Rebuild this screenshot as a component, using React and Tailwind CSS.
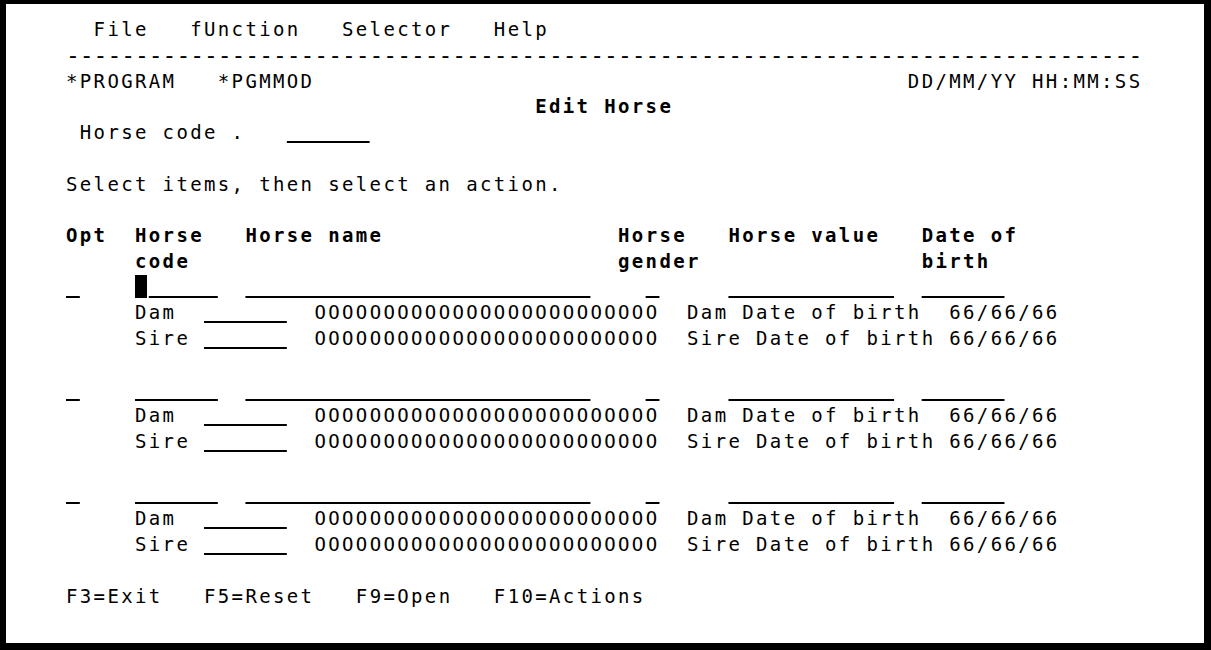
import React from 'react';

// 5250 style green-screen, drawn as an 80 column character grid
const O25 = 'O'.repeat(25);

const Field = ({ n, cursor }) => {
    if (cursor) {
        return (
            <>
                <span className="inline-block w-[13.8px] h-[23px] align-[-4px]">
                    <span className="block w-[12px] h-full bg-black" />
                </span>
                <span className="underline decoration-2 underline-offset-[2px] decoration-black">
                    {' '.repeat(n - 1)}
                </span>
            </>
        );
    }
    return (
        <span className="underline decoration-2 underline-offset-[2px] decoration-black">
            {' '.repeat(n)}
        </span>
    );
};

const Row = ({ items = [], className = '' }) => {
    let pos = 0;
    const parts = [];
    items.forEach((it, i) => {
        const gap = it.col - pos;
        if (gap > 0) parts.push(<span key={`g${i}`}>{' '.repeat(gap)}</span>);
        if (it.field) {
            parts.push(<Field key={i} n={it.field} cursor={it.cursor} />);
            pos = it.col + it.field;
        } else {
            parts.push(
                <span key={i} className={it.bold ? 'font-bold' : ''}>
                    {it.text}
                </span>
            );
            pos = it.col + it.text.length;
        }
    });
    return <div className={`h-[25.75px] whitespace-pre ${className}`}>{parts}</div>;
};

const HorseBlock = ({ cursor }) => (
    <>
        <Row
            items={[
                { col: 1, field: 1 },
                { col: 6, field: 6, cursor },
                { col: 14, field: 25 },
                { col: 43, field: 1 },
                { col: 49, field: 12 },
                { col: 63, field: 6 },
            ]}
        />
        <Row
            items={[
                { col: 6, text: 'Dam' },
                { col: 11, field: 6 },
                { col: 19, text: O25 },
                { col: 46, text: 'Dam Date of birth' },
                { col: 65, text: '66/66/66' },
            ]}
        />
        <Row
            items={[
                { col: 6, text: 'Sire' },
                { col: 11, field: 6 },
                { col: 19, text: O25 },
                { col: 46, text: 'Sire Date of birth' },
                { col: 65, text: '66/66/66' },
            ]}
        />
        <Row />
    </>
);

export default function App() {
    return (
        <div className="w-[1211px] h-[650px] bg-white border-black border-t-4 border-l-[6px] border-r-[7px] border-b-[7px] overflow-hidden">
            <div
                className="pt-[13px] pl-[46.2px] text-black text-[19px] leading-[25.75px] tracking-[2.361px]"
                style={{ fontFamily: '"DejaVu Sans Mono", "Liberation Mono", monospace' }}
            >
                <Row
                    items={[
                        { col: 3, text: 'File' },
                        { col: 10, text: 'fUnction' },
                        { col: 21, text: 'Selector' },
                        { col: 32, text: 'Help' },
                    ]}
                />
                {/* separator dashes: bigger glyph, same 13.8px cell */}
                <Row
                    className="text-[23px] tracking-[-0.05px]"
                    items={[{ col: 1, text: '-'.repeat(78) }]}
                />
                <Row
                    items={[
                        { col: 1, text: '*PROGRAM' },
                        { col: 12, text: '*PGMMOD' },
                        { col: 62, text: 'DD/MM/YY HH:MM:SS' },
                    ]}
                />
                <Row items={[{ col: 35, text: 'Edit Horse', bold: true }]} />
                <Row
                    items={[
                        { col: 2, text: 'Horse code .' },
                        { col: 17, field: 6 },
                    ]}
                />
                <Row />
                <Row items={[{ col: 1, text: 'Select items, then select an action.' }]} />
                <Row />
                <Row
                    items={[
                        { col: 1, text: 'Opt', bold: true },
                        { col: 6, text: 'Horse', bold: true },
                        { col: 14, text: 'Horse name', bold: true },
                        { col: 41, text: 'Horse', bold: true },
                        { col: 49, text: 'Horse value', bold: true },
                        { col: 63, text: 'Date of', bold: true },
                    ]}
                />
                <Row
                    items={[
                        { col: 6, text: 'code', bold: true },
                        { col: 41, text: 'gender', bold: true },
                        { col: 63, text: 'birth', bold: true },
                    ]}
                />
                <HorseBlock cursor />
                <HorseBlock />
                <HorseBlock />
                <Row
                    items={[
                        { col: 1, text: 'F3=Exit' },
                        { col: 11, text: 'F5=Reset' },
                        { col: 22, text: 'F9=Open' },
                        { col: 32, text: 'F10=Actions' },
                    ]}
                />
            </div>
        </div>
    );
}
